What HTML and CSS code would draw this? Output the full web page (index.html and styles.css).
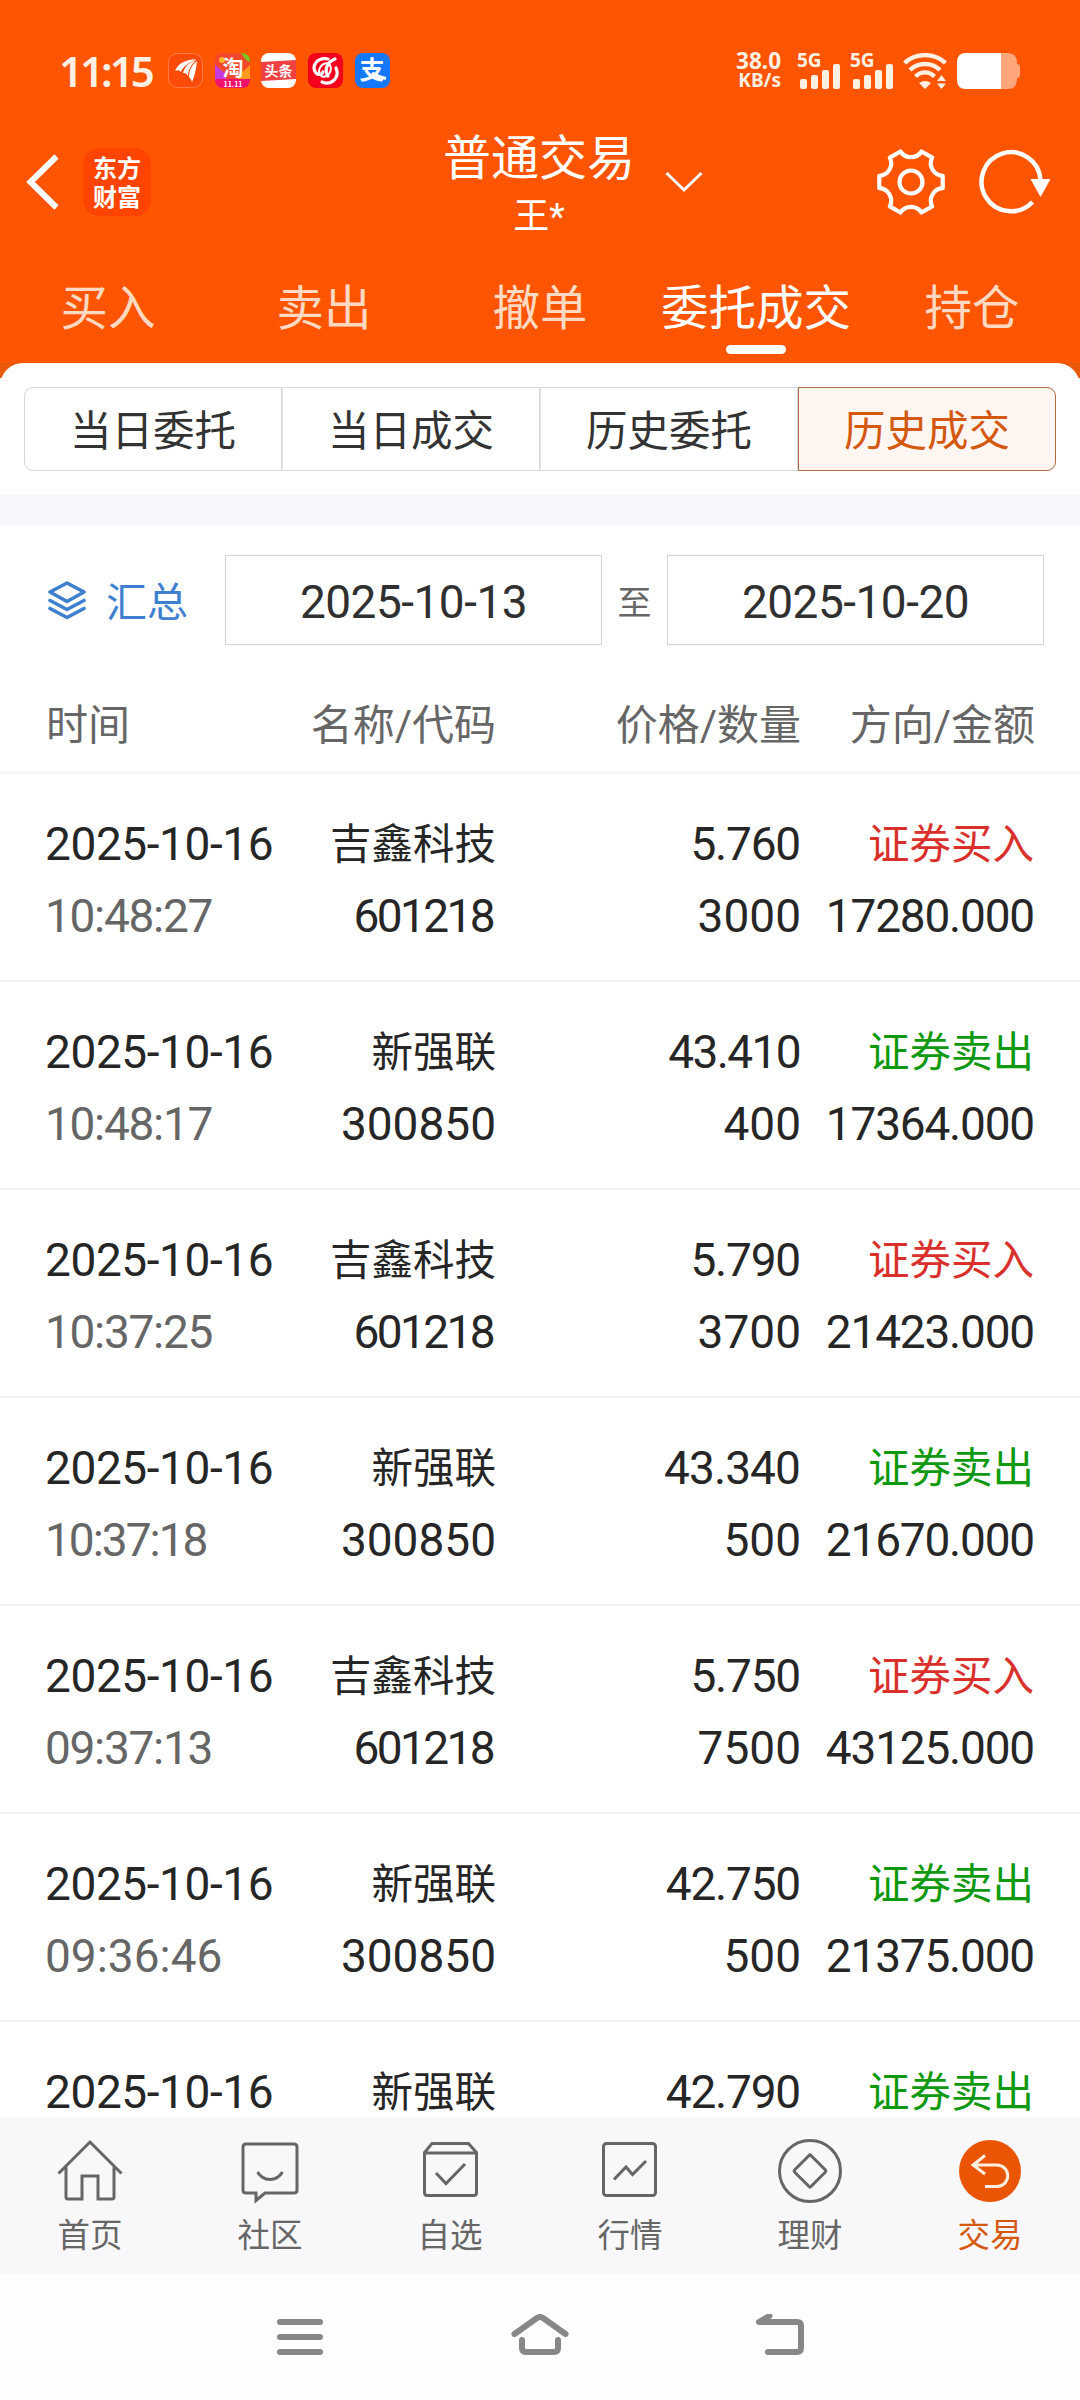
FILE: index.html
```html
<!DOCTYPE html>
<html lang="zh-CN">
<head>
<meta charset="utf-8">
<title>普通交易</title>
<link rel="stylesheet" href="styles.css">
</head>
<body>
<div class="phone">
  <header class="header">
    <div class="status">
      <span class="clock">11:15</span>
      <div class="apps">
        <svg width="35" height="35" viewBox="0 0 35 35"><rect x=".5" y=".5" width="34" height="34" rx="9" fill="#ff4b0a" stroke="#ff7a45"/><path d="M7 18C10 10 17 7 28 6C21 10 14 14 13 19C11 17 9 17 7 18ZM15 20C17 13 22 9 28 7C23 12 20 17 20 23C18 20 17 20 15 20ZM21 24C21 16 25 11 29 8C28 14 28 20 24 29C23 26 22 25 21 24Z" fill="#fff"/></svg>
        <svg width="35" height="35" viewBox="0 0 35 35"><defs><clipPath id="tb"><rect width="35" height="35" rx="8"/></clipPath></defs><g clip-path="url(#tb)"><rect width="35" height="35" fill="#f5472b"/><path d="M0 12L12 22L10 28H0Z" fill="#c43be0"/><path d="M24 22L35 12V28H22Z" fill="#ff9a1f"/><path d="M26 0H35V9L31 7Z" fill="#7ac81e"/><rect y="26" width="35" height="9" fill="#f0126b"/></g><circle cx="7" cy="7" r="3" fill="#ffb52b"/><text x="18" y="22" class="glyph taobao">淘</text><text x="18" y="33.500" class="glyph sale">11.11</text></svg>
        <svg width="35" height="35" viewBox="0 0 35 35"><rect width="35" height="35" rx="8" fill="#fff"/><path d="M0 9L35 7V26L0 28Z" fill="#f04142"/><text x="17.5" y="22.500" class="glyph toutiao">头条</text></svg>
        <svg width="35" height="35" viewBox="0 0 35 35"><rect width="35" height="35" rx="8" fill="#f2001c"/><path d="M20 6C9 4 3 13 8 20C10 22 14 22 15 19M14 29C24 33 32 24 28 15M27 6C19 9 16 17 20 23" fill="none" stroke="#fff" stroke-width="3.2" stroke-linecap="round"/><ellipse cx="17" cy="17" rx="5.500" ry="7" fill="none" stroke="#fff" stroke-width="2" transform="rotate(30 17 17)"/></svg>
        <svg width="35" height="35" viewBox="0 0 35 35"><rect width="35" height="35" rx="8" fill="#1677ff"/><text x="17" y="26" class="glyph alipay">支</text><path d="M17 20C22 23 27 24.500 31 25.500" stroke="#fff" stroke-width="3" fill="none"/></svg>
      </div>
      <div class="speed"><span>38.0</span><span class="unit">KB/s</span></div>
      <div class="signal"><span>5G</span><svg width="41" height="25" viewBox="0 0 41 25"><g fill="#fff0e4"><rect y="15" width="7" height="10" rx="2"/><rect x="11" y="11" width="7" height="14" rx="2"/><rect x="22" y="6" width="7" height="19" rx="2"/><rect x="33" width="7" height="25" rx="2"/></g></svg></div>
      <div class="signal second"><span>5G</span><svg width="41" height="25" viewBox="0 0 41 25"><g fill="#fff0e4"><rect y="15" width="7" height="10" rx="2"/><rect x="11" y="11" width="7" height="14" rx="2"/><rect x="22" y="6" width="7" height="19" rx="2"/><rect x="33" width="7" height="25" rx="2"/></g></svg></div>
      <svg class="wifi" width="45" height="36" viewBox="0 0 45 36"><g fill="none" stroke="#fff0e4" stroke-width="4.4"><path d="M1.500 10C13-.5 31-.5 42.500 10"/><path d="M7 17C15 9 29 9 37 17"/><path d="M12.500 23.500C18 18 26 18 31.500 23.500"/></g><path d="M16 30Q22 26 28 30L22 36ZM34 28L38.500 22L43 28ZM34 30.500L38.500 36L43 30.500Z" fill="#fff0e4"/></svg>
      <svg class="battery" width="63" height="36" viewBox="0 0 63 36"><path d="M44 0H51Q60 0 60 10V11Q63 11 63 14V22Q63 25 60 25V26Q60 36 51 36H44Z" fill="#ffa67a"/><path d="M44 0H9Q0 0 0 9V27Q0 36 9 36H44Z" fill="#fff"/></svg>
    </div>
    <div class="titlebar">
      <div class="left">
        <svg width="34" height="56" viewBox="0 0 34 56"><path d="M30.500 2.500L4.500 28L30.500 53.500" fill="none" stroke="#fff" stroke-width="6"/></svg>
        <div class="brand"><span>东方</span><span>财富</span></div>
      </div>
      <div class="account"><h1>普通交易</h1><p>王*</p></div>
      <svg class="down" width="38" height="22" viewBox="0 0 38 22"><path d="M1.500 2L19 19L36.500 2" fill="none" stroke="#fff" stroke-width="3"/></svg>
      <div class="tools">
        <svg width="68" height="68" viewBox="-34 -34 68 68"><path d="M31.700 6.200V-6.200A12.500 12.500 0 0 1 21.200-24.400L10.500-30.500A12.500 12.500 0 0 1-10.500-30.500L-21.200-24.400A12.500 12.500 0 0 1-31.700-6.200V6.200A12.500 12.500 0 0 1-21.200 24.400L-10.500 30.500A12.500 12.500 0 0 1 10.500 30.500L21.200 24.400A12.500 12.500 0 0 1 31.700 6.200Z" fill="none" stroke="#fff" stroke-width="4.200" stroke-linejoin="round"/><circle r="11.500" fill="none" stroke="#fff" stroke-width="4.200"/></svg>
        <svg width="72" height="68" viewBox="-33 -34 72 68"><path d="M21.500 20A29.500 29.500 0 1 1 29.500-2" fill="none" stroke="#fff" stroke-width="4.500"/><path d="M19.500-3H39.500L29.500 15Z" fill="#fff"/></svg>
      </div>
    </div>
    <nav class="tabs">
      <span>买入</span><span>卖出</span><span>撤单</span><span class="on">委托成交</span><span>持仓</span>
    </nav>
  </header>
  <div class="card-back">
    <div class="card">
      <div class="segments">
        <span>当日委托</span><span>当日成交</span><span>历史委托</span><span class="on">历史成交</span>
      </div>
    </div>
  </div>
  <main class="content">
    <div class="filter">
      <div class="summary">
        <svg width="38" height="39" viewBox="0 0 38 39"><g fill="none" stroke="#3f7fd0" stroke-width="3.600" stroke-linejoin="round" stroke-linecap="round"><path d="M19 2L36 11L19 20.500L2 11Z"/><path d="M2 19.500L19 28.500L36 19.500M2 27.500L19 36.500L36 27.500"/></g></svg>
        <span>汇总</span>
      </div>
      <div class="date">2025-10-13</div>
      <span class="to">至</span>
      <div class="date">2025-10-20</div>
    </div>
    <div class="thead"><span>时间</span><span>名称/代码</span><span>价格/数量</span><span>方向/金额</span></div>
    <div class="list">
      <div class="row"><span class="day">2025-10-16</span><span>吉鑫科技</span><span class="num">5.760</span><span class="buy">证券买入</span><span class="time">10:48:27</span><span class="ones">601218</span><span>3000</span><span class="num">17280.000</span></div>
      <div class="row"><span class="day">2025-10-16</span><span>新强联</span><span class="num ends-ten">43.410</span><span class="sell">证券卖出</span><span class="time">10:48:17</span><span>300850</span><span>400</span><span class="num">17364.000</span></div>
      <div class="row"><span class="day">2025-10-16</span><span>吉鑫科技</span><span class="num">5.790</span><span class="buy">证券买入</span><span class="time">10:37:25</span><span class="ones">601218</span><span>3700</span><span class="num">21423.000</span></div>
      <div class="row"><span class="day">2025-10-16</span><span>新强联</span><span class="num wide">43.340</span><span class="sell">证券卖出</span><span class="time tight">10:37:18</span><span>300850</span><span>500</span><span class="num">21670.000</span></div>
      <div class="row"><span class="day">2025-10-16</span><span>吉鑫科技</span><span class="num">5.750</span><span class="buy">证券买入</span><span class="time">09:37:13</span><span class="ones">601218</span><span>7500</span><span class="num">43125.000</span></div>
      <div class="row"><span class="day">2025-10-16</span><span>新强联</span><span class="num">42.750</span><span class="sell">证券卖出</span><span class="time loose">09:36:46</span><span>300850</span><span>500</span><span class="num">21375.000</span></div>
      <div class="row"><span class="day">2025-10-16</span><span>新强联</span><span class="num">42.790</span><span class="sell">证券卖出</span></div>
    </div>
  </main>
  <nav class="tabbar">
    <div class="item"><svg viewBox="-33 -33 66 66"><path d="M-31.500 2.500L0-29L31.500 2.500M-24-4V26Q-24 28-22 28H-8V5H8V28H22Q24 28 24 26V-4"/></svg><span>首页</span></div>
    <div class="item"><svg viewBox="-33 -33 66 66"><path d="M-24-27H24Q27-27 27-24V19Q27 22 24 22H-5L-14 29.500V22H-24Q-27 22-27 19V-24Q-27-27-24-27Z"/><path d="M-12.500 1Q-8 8.500 0 8.500T12.500 1"/></svg><span>社区</span></div>
    <div class="item"><svg viewBox="-33 -33 66 66"><path d="M-18-27.500H18.500L26.500-18.500V21.500Q26.500 24.500 23.500 24.500H-22.500Q-25.500 24.500-25.500 21.500V-18.500ZM-25.500-18H26.500M-14 2L-4 12.500L15-7"/></svg><span>自选</span></div>
    <div class="item"><svg viewBox="-33 -33 66 66"><rect x="-26.500" y="-27.500" width="52" height="52" rx="3"/><path d="M-16 8.500L-4-4L2.500 3.500L16-10"/></svg><span>行情</span></div>
    <div class="item"><svg viewBox="-33 -33 66 66"><circle r="30.500"/><path d="M-1-15.500Q0-17 1-15.500L15-1.500Q16.500 0 15 1.500L1 15.500Q0 17-1 15.500L-15 1.500Q-16.500 0-15-1.500Z"/></svg><span>理财</span></div>
    <div class="item on"><svg viewBox="-33 -33 66 66"><circle r="31" class="disc"/><path class="arrow" d="M-5-15.500L-17-6L-5 3M-17-6H7A10.700 10.700 0 0 1 7 15.500H-5"/></svg><span>交易</span></div>
  </nav>
  <div class="sysnav">
    <svg width="60" height="46" viewBox="-30 -23 60 46"><path d="M-20-15H20M-20 0H20M-20 15H20"/></svg>
    <svg width="60" height="46" viewBox="-30 -23 60 46"><path d="M-25.500-3L-3-19Q0-21 3-19L25.500-3M-18 3V11Q-18 15-14 15H14Q18 15 18 11V3"/></svg>
    <svg width="60" height="46" viewBox="-30 -23 60 46"><path d="M-10.500-21L-21-15H17Q21-15 21-11V11Q21 15 17 15H-12"/></svg>
  </div>
</div>
</body>
</html>
```
FILE: styles.css
```css
* { box-sizing: border-box; }
body { margin: 0; background: #fff; font-family: Roboto, "Noto Sans CJK SC", sans-serif; color: #262626; }
h1, p { margin: 0; font-weight: 400; }
svg { display: block; flex: none; }
.phone { width: 1080px; height: 2400px; display: flex; flex-direction: column; overflow: hidden; }

.header { height: 363px; background: #ff5500; color: #fff; display: flex; flex-direction: column; }
.status { height: 118px; padding: 53px 60px 0 59px; display: flex; align-items: flex-start; color: #fff0e4; }
.clock { width: 109px; font: 600 42px/35px "Noto Sans", sans-serif; letter-spacing: -3px; }
.apps { display: flex; gap: 11.700px; width: 566px; }
.glyph { font-family: "Noto Sans CJK SC", sans-serif; fill: #fff; text-anchor: middle; font-weight: 700; }
.taobao { font-size: 21px; }
.sale { font-size: 7px; }
.toutiao { font-size: 14px; }
.alipay { font-size: 25px; }
.speed { width: 47px; display: flex; flex-direction: column; align-items: flex-end; font: 700 22.500px/16px "Noto Sans", sans-serif; }
.speed .unit { font-size: 19px; line-height: 23px; }
.signal { width: 53px; height: 36px; margin-left: 16px; display: grid; align-items: end; }
.signal.second { margin-left: 0; }
.signal span, .signal svg { grid-area: 1 / 1; }
.signal span { align-self: start; font: 700 19px/15px "Noto Sans", sans-serif; }
.signal svg { margin-left: 3px; }
.battery { margin-left: 9px; }

.titlebar { height: 142px; display: grid; grid-template-columns: 443px 192px 1fr auto; align-items: center; padding: 0 30px 16px 0; }
.left { display: flex; align-items: center; gap: 23px; padding-left: 26px; }
.brand { width: 68px; height: 68px; border-radius: 16px; background: #ff4400; display: flex; flex-direction: column; align-items: center; justify-content: center; font: 700 24px/29px "Noto Sans CJK SC", sans-serif; padding-bottom: 2px; }
.account { text-align: center; white-space: nowrap; padding-top: 12px; }
.account h1 { font-size: 48px; line-height: 58px; }
.account p { font-size: 36px; line-height: 58px; }
.down { margin-left: 30px; }
.tools { display: flex; gap: 33px; }

.tabs { flex: 1; display: flex; padding: 21px 0 0; font-size: 47.500px; line-height: 56px; color: #ffd9c2; }
.tabs span { width: 216px; text-align: center; }
.tabs .on { color: #fff; display: flex; flex-direction: column; align-items: center; }
.tabs .on::after { content: ""; width: 60px; height: 9px; margin-top: 8px; border-radius: 5px; background: #fff; }

.card-back { background: linear-gradient(#e8590c 15px, #fff 15px); border-bottom: 31px solid #f5f7fa; }
.card { height: 131px; padding: 24px; background: #fff; border-radius: 23px 23px 0 0; }
.segments { height: 84px; display: flex; font-size: 41.500px; color: #333; }
.segments span { flex: 1; border: 1px solid #d5d7d9; display: flex; align-items: center; justify-content: center; padding-bottom: 2px; }
.segments span:first-child { border-radius: 9px 0 0 9px; }
.segments span + span { border-left-color: #e6e8e9; }
.segments .on { border-color: #b0693f; border-radius: 0 9px 9px 0; background: #fff6f2; color: #d4580f; }
.segments .on:last-child { border-left-color: #b0693f; }

.content { height: 1593px; background: #fff; overflow: hidden; }
.filter { height: 151px; padding: 30px 36px 31px 48px; display: flex; align-items: center; }
.summary { width: 177px; display: flex; align-items: center; gap: 20px; color: #3f7fd0; font-size: 41px; }
.summary span { padding-bottom: 3px; }
.date { width: 377px; height: 90px; padding-top: 3px; border: 1px solid #d3d3d3; display: flex; align-items: center; justify-content: center; font-size: 46px; letter-spacing: -.5px; color: #303030; }
.to { flex: 1; text-align: center; font-size: 34px; color: #666; }
.thead, .row { display: grid; grid-template-columns: 240px 210px 305px 234px; padding-left: 46px; }
.thead span, .row span { text-align: right; }
.thead span:nth-child(4n + 1), .row span:nth-child(4n + 1) { text-align: left; }
.thead { height: 98px; padding-top: 22px; border-bottom: 3px solid #f6f7f8; font-size: 42px; line-height: 56px; color: #666; }
.row { height: 208px; padding-top: 34px; border-bottom: 2px solid #f0f0f0; grid-template-rows: 72px 72px; font-size: 46px; line-height: 72px; white-space: nowrap; }
.row span:nth-child(2), .row .buy, .row .sell { font-size: 41.500px; padding-top: 1px; }
.row .buy, .row .sell { padding-right: 1px; }
.row .day { letter-spacing: -.4px; margin-left: -1px; }
.row .time { letter-spacing: -1.300px; margin-left: -1px; color: #666; }
.row .tight { letter-spacing: -2px; }
.row .loose { letter-spacing: 0; }
.row .num { letter-spacing: -1.200px; padding-right: 1px; }
.row .ends-ten { letter-spacing: -1.600px; }
.row .wide { letter-spacing: -.9px; }
.row .ones { letter-spacing: -2.600px; padding-right: 3px; }
.row .buy { color: #d9302c; }
.row .sell { color: #0f990f; }

.tabbar { height: 156px; background: #f8f8fa; display: flex; color: #666; }
.item { flex: 1; display: flex; flex-direction: column; align-items: center; padding-top: 20px; font-size: 32.500px; line-height: 40px; }
.item svg { width: 66px; height: 66px; margin-bottom: 12px; fill: none; stroke: #666; stroke-width: 3; }
.item.on { color: #d4580f; }
.item .disc { fill: #ea5504; stroke: none; }
.item .arrow { stroke: #ffeede; }
.sysnav { height: 126px; background: #fefefe; padding: 40px 270px 0; display: flex; justify-content: space-between; }
.sysnav svg { fill: none; stroke: #888; stroke-width: 6; stroke-linecap: round; stroke-linejoin: round; }
```
